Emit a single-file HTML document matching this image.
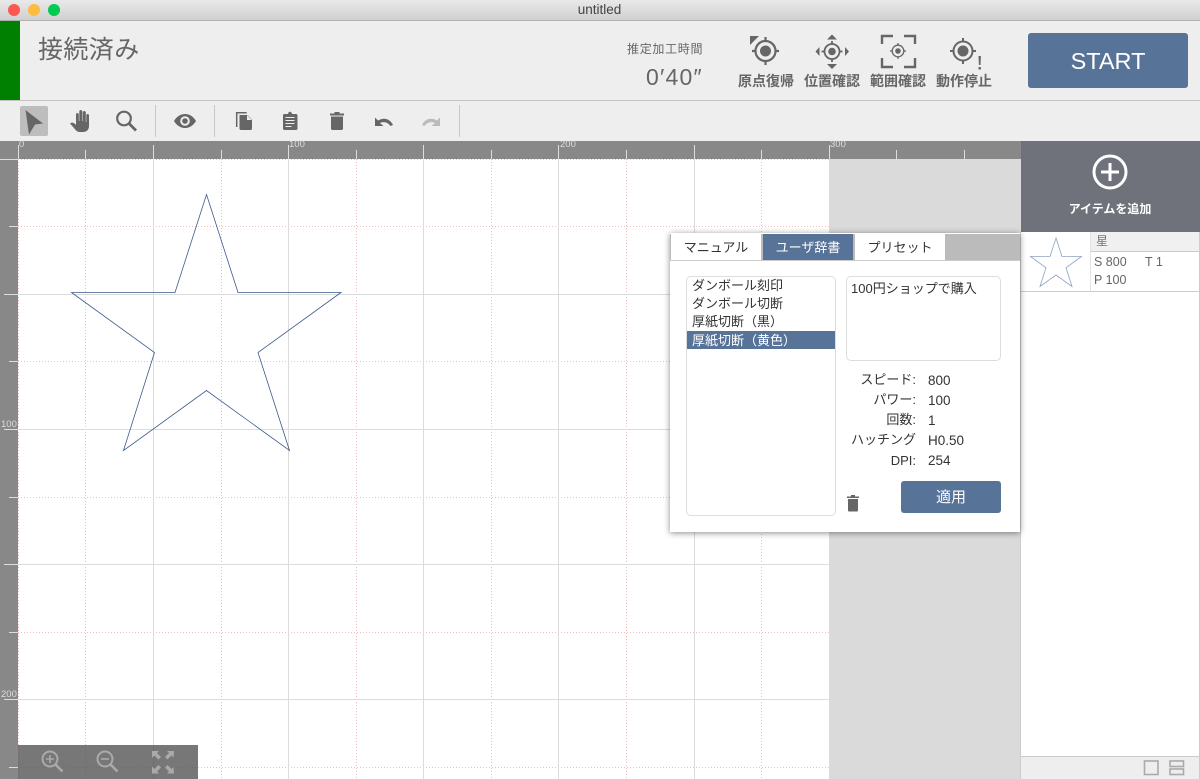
<!DOCTYPE html>
<html lang="ja"><head><meta charset="utf-8"><title>untitled</title>
<style>
html,body{margin:0;padding:0;width:1200px;height:779px;overflow:hidden;background:#fff}
body{font-family:"Liberation Sans","Noto Sans CJK JP",sans-serif;position:relative}
.a{position:absolute;white-space:nowrap}
svg{position:absolute;overflow:visible}
.lbl{font-size:14px;font-weight:700;color:#666;top:72px;line-height:18px;width:60px;text-align:center}
.tab{top:234px;height:26px;line-height:27px;text-align:center;font-size:13px;color:#333;background:#fff}
.li{left:692px;font-size:13px;line-height:18px;color:#333}
.k{right:284px;font-size:13px;line-height:20px;color:#333;text-align:right}
.v{left:928px;font-size:13.5px;line-height:20px;color:#333}
</style></head><body>

<!-- title bar -->
<div class="a" style="left:0;top:0;width:1200px;height:20px;background:linear-gradient(#e9e9e9,#d0d0d0)"></div>
<div class="a" style="left:0;top:20px;width:1200px;height:1px;background:#b1b1b1"></div>
<div class="a" style="left:8px;top:4px;width:12px;height:12px;border-radius:50%;background:#fc5753"></div>
<div class="a" style="left:28px;top:4px;width:12px;height:12px;border-radius:50%;background:#fdbc40"></div>
<div class="a" style="left:48px;top:4px;width:12px;height:12px;border-radius:50%;background:#02c94f"></div>
<div class="a" style="left:0;top:1px;width:1199px;text-align:center;font-size:13.5px;line-height:18px;color:#444">untitled</div>

<!-- header -->
<div class="a" style="left:0;top:21px;width:1200px;height:79px;background:#eee"></div>
<div class="a" style="left:0;top:21px;width:20px;height:79px;background:#008000"></div>
<div class="a" style="left:38px;top:32px;font-size:25px;line-height:36px;color:#666;letter-spacing:.4px">接続済み</div>
<div class="a" style="left:627px;top:40px;font-size:12px;line-height:18px;color:#666;letter-spacing:.7px">推定加工時間</div>
<div class="a" style="left:646px;top:62px;font-size:23px;line-height:30px;color:#666;letter-spacing:1.2px">0′40″</div>

<svg style="left:0;top:0" width="1200" height="100" fill="none">
 <!-- home -->
 <g stroke="#666" stroke-width="2.2"><circle cx="765.500" cy="51" r="10"/><path d="M765.500 37v5M765.500 60v5M752 51h4M775 51h4"/></g>
 <circle cx="765.500" cy="51" r="5.500" fill="#666"/><path d="M750 36h9l-9 9z" fill="#666"/>
 <!-- position -->
 <g stroke="#666" stroke-width="1.8"><circle cx="832" cy="51.500" r="7.500"/><path d="M832 41v3M832 59v3M821.500 51.500h3M839.500 51.500h3"/></g>
 <circle cx="832" cy="51.500" r="3.800" fill="#666"/>
 <path d="M832 34.500l5 5h-10zM832 69l-5-5h10zM815.500 51.500l4-4.500v9zM849 51.500l-4-4.500v9z" fill="#666"/>
 <!-- area -->
 <path d="M882 44v-8h11M904 36h11v8M882 58v9h11M904 67h11v-9" stroke="#666" stroke-width="2.400"/>
 <g stroke="#666" stroke-width="1.300"><circle cx="898" cy="51" r="5.800"/><path d="M898 43v2.500M898 56.500v2.500M890 51h2.500M903.500 51h2.500"/></g>
 <circle cx="898" cy="51" r="2.800" fill="#666"/>
 <!-- stop -->
 <g stroke="#666" stroke-width="2"><circle cx="963" cy="51" r="9.500"/><path d="M963 38v4M963 60v4M950 51h4M972 51h4"/></g>
 <circle cx="963" cy="51" r="5.500" fill="#666"/>
 <path d="M978.500 56h2.400l-.4 9h-1.600zM978.500 67h2.400v2.500h-2.400z" fill="#666"/>
</svg>
<div class="a lbl" style="left:736px">原点復帰</div>
<div class="a lbl" style="left:802px">位置確認</div>
<div class="a lbl" style="left:868px">範囲確認</div>
<div class="a lbl" style="left:934px">動作停止</div>
<div class="a" style="left:1028px;top:33px;width:160px;height:55px;border-radius:3px;background:#587398;color:#fff;font-size:23.500px;line-height:57px;text-align:center">START</div>

<!-- toolbar -->
<div class="a" style="left:0;top:100px;width:1200px;height:1px;background:#c3c3c3"></div>
<div class="a" style="left:0;top:101px;width:1200px;height:40px;background:#eee"></div>
<div class="a" style="left:20px;top:106px;width:28px;height:30px;border-radius:2px;background:#bdbdbd"></div>
<div class="a" style="left:155px;top:105px;width:1px;height:32px;background:#c8c8c8"></div>
<div class="a" style="left:214px;top:105px;width:1px;height:32px;background:#c8c8c8"></div>
<div class="a" style="left:459px;top:105px;width:1px;height:32px;background:#c8c8c8"></div>
<svg style="left:0;top:100px" width="480" height="40" fill="none">
 <path d="M25.500 10L43 23.500L35 24.500L29 34.500Z" fill="#666"/>
 <!-- hand -->
 <path d="M70 23.500c2-1.600 4-1 6 1.500V14.500c0-2 2.600-2 2.800 0V21h.5V11.500c0-2 2.800-2 3 0V21h.5V12.500c0-2 2.800-2 3 0V22h.5v-6.500c0-2 2.700-2 2.700 0V26c0 3.800-2.500 6-6 6h-2.500c-2.500 0-4-.8-5.500-2.800z" fill="#666"/>
 <!-- search -->
 <circle cx="124" cy="18.500" r="6.800" stroke="#666" stroke-width="2.200"/><path d="M129 23.500l7 7" stroke="#666" stroke-width="2.800"/>
 <!-- eye -->
 <path d="M174 21c3-5 7-7 11-7s8 2 11 7c-3 5-7 7-11 7s-8-2-11-7z" fill="#666"/><circle cx="185" cy="21" r="4.800" fill="#eee"/><circle cx="185" cy="21" r="2.800" fill="#666"/>
 <!-- copy -->
 <path d="M236.700 27v-14.300h10" stroke="#666" stroke-width="1.500"/>
 <path d="M239.500 15h8l4.500 4.500V28.500a1.500 1.500 0 0 1-1.500 1.500H241a1.500 1.500 0 0 1-1.500-1.500z" fill="#666"/><path d="M247 15v5h5z" fill="#eee"/>
 <!-- clipboard -->
 <path d="M284.500 14h3.500c.3-3 3.700-3 4 0h4a1.500 1.500 0 0 1 1.500 1.500v13a1.500 1.500 0 0 1-1.500 1.500h-11.500a1.500 1.500 0 0 1-1.500-1.500v-13a1.500 1.500 0 0 1 1.500-1.500z" fill="#666"/>
 <path d="M285.500 17.500h9M285.500 20.500h9M285.500 23.500h9M285.500 26.500h6" stroke="#eee" stroke-width="1.100"/>
 <!-- trash -->
 <path d="M330 13.500h4.500v-1.500h5v1.500h4.500v2h-14zM331 16.500h12v12a1.500 1.500 0 0 1-1.500 1.500h-9a1.500 1.500 0 0 1-1.500-1.500z" fill="#666"/>
 <!-- undo / redo -->
 <path d="M375 17.500v8.500h8.500l-3.500-3c4-2 8-.5 10.500 3l2.500-1c-2.800-6-9-8-15-4.500z" fill="#666"/>
 <path d="M440 17.500v8.500h-8.500l3.500-3c-4-2-8-.5-10.500 3l-2.500-1c2.800-6 9-8 15-4.500z" fill="#bbb"/>
</svg>

<!-- canvas -->
<div class="a" style="left:829px;top:159px;width:192px;height:620px;background:#dadada"></div>
<svg style="left:0;top:0" width="1200" height="779" fill="none">
 <g stroke="#f5bcbc" stroke-width="1" stroke-dasharray="1 2">
  <path d="M18.500 159v620M85.500 159v620M221.500 159v620M356.500 159v620M491.500 159v620M626.500 159v620M761.500 159v620"/>
  <path d="M18 159.500h811M18 226.500h811M18 361.500h811M18 497.500h811M18 632.500h811M18 767.500h811"/>
 </g>
 <g stroke="#dcdcdc" stroke-width="1">
  <path d="M153.500 159v620M288.500 159v620M423.500 159v620M558.500 159v620M694.500 159v620M829.500 159v620"/>
  <path d="M18 294.500h811M18 429.500h811M18 564.500h811M18 699.500h811"/>
 </g>
 <path d="M206.500 194.500L238 292.500H341L258 352.500L289.500 450.500L206.500 390.500L123.500 450.500L154.500 352.500L71.500 292.500H175Z" stroke="#3c5a8c" stroke-width=".8"/>
</svg>

<!-- rulers -->
<div class="a" style="left:0;top:141px;width:1021px;height:18px;background:#888"></div>
<div class="a" style="left:0;top:141px;width:18px;height:638px;background:#888"></div>
<svg style="left:0;top:0" width="1021" height="779" fill="none">
 <g stroke="#ddd" stroke-width="1">
  <path d="M18.500 145v14M153.500 145v14M288.500 145v14M423.500 145v14M558.500 145v14M694.500 145v14M829.500 145v14"/>
  <path d="M85.500 150v9M221.500 150v9M356.500 150v9M491.500 150v9M626.500 150v9M761.500 150v9M896.500 150v9M964.500 150v9"/>
  <path d="M0 159.500h18M4 294.500h14M4 429.500h14M4 564.500h14M4 699.500h14"/>
  <path d="M9 226.500h9M9 361.500h9M9 497.500h9M9 632.500h9M9 767.500h9"/>
 </g>
</svg>
<div class="a" style="left:19px;top:139px;font-size:9.500px;line-height:12px;color:#ddd">0</div>
<div class="a" style="left:289px;top:139px;font-size:9.500px;line-height:12px;color:#ddd">100</div>
<div class="a" style="left:560px;top:139px;font-size:9.500px;line-height:12px;color:#ddd">200</div>
<div class="a" style="left:830px;top:139px;font-size:9.500px;line-height:12px;color:#ddd">300</div>
<div class="a" style="left:1px;top:419px;font-size:9.500px;line-height:12px;color:#ddd">100</div>
<div class="a" style="left:1px;top:689px;font-size:9.500px;line-height:12px;color:#ddd">200</div>

<!-- zoom controls -->
<div class="a" style="left:18px;top:745px;width:180px;height:34px;background:rgba(85,85,85,.8)"></div>
<svg style="left:0;top:745px" width="200" height="34" fill="none" stroke="#aaa">
 <circle cx="50" cy="14" r="7.500" stroke-width="2"/><path d="M55.500 19.500l7 7" stroke-width="2.600"/><path d="M46 14h8M50 10v8" stroke-width="1.600"/>
 <circle cx="105" cy="14" r="7.500" stroke-width="2"/><path d="M110.500 19.500l7 7" stroke-width="2.600"/><path d="M101 14h8" stroke-width="1.600"/>
 <g stroke="none" fill="#aaa">
  <path d="M152 6h7l-2 2 4 4-2.500 2.500-4-4-2.500 2.500zM174 6h-7l2 2-4 4 2.500 2.500 4-4 2 2zM152 28.500h7l-2-2 4-4-2.500-2.500-4 4-2.500-2.500zM174 28.500h-7l2-2-4-4 2.500-2.500 4 4 2-2z"/>
 </g>
</svg>

<!-- right panel -->
<div class="a" style="left:1021px;top:141px;width:179px;height:91px;background:#6f717b"></div>
<svg style="left:1021px;top:141px" width="179" height="60" fill="none" stroke="#fff">
 <circle cx="89" cy="31" r="16" stroke-width="3"/><path d="M89 22v18M80 31h18" stroke-width="3"/>
</svg>
<div class="a" style="left:1021px;top:200px;width:178px;text-align:center;font-size:12px;font-weight:700;line-height:18px;color:#fff">アイテムを追加</div>
<div class="a" style="left:1020px;top:232px;width:1px;height:547px;background:#ccc"></div>
<div class="a" style="left:1199px;top:232px;width:1px;height:547px;background:#ccc"></div>
<div class="a" style="left:1090px;top:232px;width:109px;height:19px;background:#f0f0f0"></div>
<div class="a" style="left:1090px;top:251px;width:109px;height:1px;background:#ccc"></div>
<div class="a" style="left:1090px;top:232px;width:1px;height:59px;background:#e4e4e4"></div>
<div class="a" style="left:1021px;top:291px;width:178px;height:1px;background:#ccc"></div>
<div class="a" style="left:1096px;top:233px;font-size:12px;line-height:17px;color:#777">星</div>
<div class="a" style="left:1094px;top:254px;font-size:12.500px;line-height:17px;color:#666">S 800</div>
<div class="a" style="left:1145px;top:254px;font-size:12.500px;line-height:17px;color:#666">T 1</div>
<div class="a" style="left:1094px;top:272px;font-size:12.500px;line-height:17px;color:#666">P 100</div>
<svg style="left:0;top:0" width="1200" height="779" fill="none">
 <path d="M1056 238L1062 256.500H1081.500L1066 267.800L1072 286.500L1056 275L1040 286.500L1046 267.800L1030.500 256.500H1050Z" stroke="#8ea2c0" stroke-width=".8"/>
</svg>
<div class="a" style="left:1021px;top:756px;width:178px;height:1px;background:#ccc"></div>
<div class="a" style="left:1021px;top:757px;width:178px;height:22px;background:#eee"></div>
<svg style="left:0;top:0" width="1200" height="779" fill="none" stroke="#aaa" stroke-width="1.600">
 <rect x="1144.500" y="761" width="13.500" height="13.500"/>
 <rect x="1170" y="761" width="13.500" height="5.500"/><rect x="1170" y="769" width="13.500" height="5.500"/>
</svg>

<!-- popup -->
<div class="a" style="left:670px;top:233px;width:350px;height:299px;background:#fff;box-shadow:0 1px 6px rgba(0,0,0,.45)"></div>
<div class="a" style="left:670px;top:234px;width:350px;height:27px;background:#bbb"></div>
<div class="a" style="left:670px;top:260px;width:350px;height:1px;background:#ccc"></div>
<div class="a tab" style="left:671px;width:90px">マニュアル</div>
<div class="a tab" style="left:763px;width:90px;background:#587398;color:#fff">ユーザ辞書</div>
<div class="a tab" style="left:855px;width:90px">プリセット</div>

<div class="a" style="left:686px;top:276px;width:148px;height:238px;border:1px solid #ddd;border-radius:5px;background:#fff"></div>
<div class="a" style="left:687px;top:331px;width:148px;height:18px;background:#587398"></div>
<div class="a li" style="top:277px">ダンボール刻印</div>
<div class="a li" style="top:295px">ダンボール切断</div>
<div class="a li" style="top:313px">厚紙切断（黒）</div>
<div class="a li" style="top:332px;color:#fff">厚紙切断（黄色）</div>

<div class="a" style="left:846px;top:276px;width:153px;height:83px;border:1px solid #ddd;border-radius:5px;background:#fff"></div>
<div class="a" style="left:851px;top:280px;font-size:13px;line-height:18px;color:#333">100円ショップで購入</div>

<div class="a k" style="top:370px">スピード:</div><div class="a v" style="top:371px">800</div>
<div class="a k" style="top:390px">パワー:</div><div class="a v" style="top:391px">100</div>
<div class="a k" style="top:410px">回数:</div><div class="a v" style="top:411px">1</div>
<div class="a k" style="top:430px">ハッチング</div><div class="a v" style="top:431px">H0.50</div>
<div class="a k" style="top:451px">DPI:</div><div class="a v" style="top:451px">254</div>

<svg style="left:840px;top:490px" width="30" height="30"><path d="M7 6.500h4v-1.500h4v1.500h4v1.500H7zM8 9h10v11.500a1 1 0 0 1-1 1H9a1 1 0 0 1-1-1z" fill="#666"/></svg>
<div class="a" style="left:901px;top:481px;width:100px;height:32px;border-radius:3px;background:#587398;color:#fff;font-size:15px;line-height:33px;text-align:center">適用</div>
</body></html>
